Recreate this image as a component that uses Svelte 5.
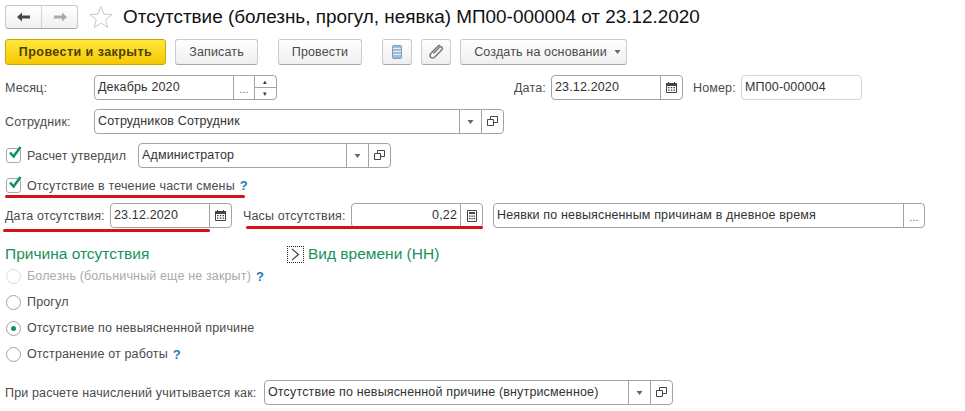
<script>
  const reasons = [
    { label: "Болезнь (больничный еще не закрыт)", disabled: true, help: true },
    { label: "Прогул" },
    { label: "Отсутствие по невыясненной причине", checked: true },
    { label: "Отстранение от работы", help: true },
  ];
</script>

{#snippet caret()}
  <svg class="ico" width="7" height="4" viewBox="0 0 7 4"><path d="M0.5 0h6L3.5 4z" fill="#666" /></svg>
{/snippet}

{#snippet openIcon()}
  <svg class="ico" width="11" height="11" viewBox="0 0 11 11" fill="none" stroke="#444" stroke-width="1">
    <path d="M3.5 3.5V0.5h7v6H6.5" />
    <path d="M0.5 3.5h6v6h-6z" />
  </svg>
{/snippet}

{#snippet calendar()}
  <svg class="ico" width="11" height="11" viewBox="0 0 11 11">
    <path d="M0.5 1.5h10v9h-10z" fill="#fff" stroke="#444" />
    <path d="M0.5 1.5h10v2h-10zM2.5 0v2M8.5 0v2" fill="#444" stroke="#444" />
    <path d="M2 5h1.5v1.2H2zM4.8 5h1.5v1.2H4.8zM7.5 5H9v1.2H7.5zM2 7.5h1.5v1.2H2zM4.8 7.5h1.5v1.2H4.8zM7.5 7.5H9v1.2H7.5z" fill="#444" />
  </svg>
{/snippet}

{#snippet check()}
  <span class="check">
    <svg width="17" height="16" viewBox="0 0 17 16" fill="none">
      <path d="M4 7.5l3.6 4L14.5 2" stroke="#14925a" stroke-width="2.6" />
    </svg>
  </span>
{/snippet}

<main>
  <header class="titlebar">
    <div class="nav">
      <button class="nav-btn" aria-label="Назад">
        <svg width="14" height="10" viewBox="0 0 14 10"><path d="M0 5l5-4.5V3.5h8v3H5v3z" fill="#444" /></svg>
      </button>
      <button class="nav-btn" aria-label="Вперед">
        <svg width="14" height="10" viewBox="0 0 14 10"><path d="M14 5L9 .5V3.5H1v3h8v3z" fill="#aaa" /></svg>
      </button>
    </div>
    <svg class="star" width="24" height="24" viewBox="0 0 24 24">
      <path d="M12 1.5l2.9 7.6 8.1.4-6.3 5.1 2.1 7.9L12 18.1l-6.8 4.4 2.1-7.9L1 9.5l8.1-.4z" fill="#fff" stroke="#c9c9c9" />
    </svg>
    <h1>Отсутствие (болезнь, прогул, неявка) МП00-000004 от 23.12.2020</h1>
  </header>

  <div class="toolbar">
    <button class="btn primary">Провести и закрыть</button>
    <button class="btn save">Записать</button>
    <button class="btn post">Провести</button>
    <button class="btn icon" aria-label="Отчеты">
      <svg width="10" height="14" viewBox="0 0 10 14">
        <rect x="0.5" y="0.5" width="9" height="13" rx="1" fill="#9dbdd6" stroke="#7d9bb3" />
        <path d="M1 3.5h8M1 6.5h8M1 9.5h8" stroke="#e4edf3" />
      </svg>
    </button>
    <button class="btn icon clip" aria-label="Файлы">
      <svg width="18" height="18" viewBox="0 0 18 18" fill="none" stroke="#707070" stroke-width="1.3">
        <path d="M6.5 10.5l6-6.2c1.7-1.6 4 .7 2.4 2.4L7.6 14.2c-2.6 2.4-6.3-1-3.8-3.7l7-7.2c.8-.8 1.6-1 2.4-.8" />
      </svg>
    </button>
    <button class="btn create">Создать на основании {@render caret()}</button>
  </div>

  <div class="row month-row">
    <span class="label w89">Месяц:</span>
    <div class="field f-month">
      <span class="val">Декабрь 2020</span>
      <span class="side dots">...</span>
      <span class="spin"><i>▴</i><i>▾</i></span>
    </div>
    <span class="label l-date">Дата:</span>
    <div class="field f-date">
      <span class="val">23.12.2020</span>
      <span class="side">{@render calendar()}</span>
    </div>
    <span class="label l-num">Номер:</span>
    <div class="field f-num"><span class="val">МП00-000004</span></div>
  </div>

  <div class="row emp-row">
    <span class="label w89">Сотрудник:</span>
    <div class="field f-emp">
      <span class="val">Сотрудников Сотрудник</span>
      <span class="side">{@render caret()}</span>
      <span class="side">{@render openIcon()}</span>
    </div>
  </div>

  <div class="row appr-row">
    {@render check()}
    <span class="label w111">Расчет утвердил</span>
    <div class="field f-appr">
      <span class="val">Администратор</span>
      <span class="side">{@render caret()}</span>
      <span class="side">{@render openIcon()}</span>
    </div>
  </div>

  <div class="row part-row">
    {@render check()}
    <span class="label">Отсутствие в течение части смены</span>
    <span class="help">?</span>
    <span class="red r1"></span>
  </div>

  <div class="row abs-row">
    <span class="label w105">Дата отсутствия:</span>
    <div class="field f-absdate">
      <span class="val">23.12.2020</span>
      <span class="side">{@render calendar()}</span>
    </div>
    <span class="label l-hours">Часы отсутствия:</span>
    <div class="field f-hours">
      <span class="val num">0,22</span>
      <span class="side">
        <svg class="ico" width="10" height="12" viewBox="0 0 10 12">
          <path d="M0.5 0.5h9v11h-9z" fill="#fff" stroke="#444" />
          <path d="M2 2h6v2H2zM2 5.5h1.5v1.3H2zM4.3 5.5h1.5v1.3H4.3zM6.5 5.5H8v1.3H6.5zM2 8h1.5v1.3H2zM4.3 8h1.5v1.3H4.3zM6.5 8H8v1.3H6.5z" fill="#444" />
        </svg>
      </span>
    </div>
    <div class="field f-kind">
      <span class="val">Неявки по невыясненным причинам в дневное время</span>
      <span class="side dots">...</span>
    </div>
    <span class="red r2"></span>
    <span class="red r3"></span>
  </div>

  <div class="row groups">
    <h2 class="w282">Причина отсутствия</h2>
    <span class="toggle">
      <svg width="9" height="13" viewBox="0 0 9 13" fill="none"><path d="M1 .8L7.5 6.5 1 12.2" stroke="#333" stroke-width="1.1" /></svg>
    </span>
    <h2>Вид времени (НН)</h2>
  </div>

  <div class="radios">
    {#each reasons as r}
      <div class="radio" class:disabled={r.disabled}>
        <span class="circle" class:on={r.checked}></span>
        <span class="label">{r.label}</span>
        {#if r.help}<span class="help">?</span>{/if}
      </div>
    {/each}
  </div>

  <div class="row calc-row">
    <span class="label w259">При расчете начислений учитывается как:</span>
    <div class="field f-calc">
      <span class="val">Отсутствие по невыясненной причине (внутрисменное)</span>
      <span class="side">{@render caret()}</span>
      <span class="side">{@render openIcon()}</span>
    </div>
  </div>
</main>

<style>
  :global(body) {
    margin: 0;
    background: #fff;
  }

  main {
    width: 965px;
    height: 411px;
    overflow: hidden;
    padding: 5px 0 0 5px;
    box-sizing: border-box;
    font-family: "Liberation Sans", Arial, sans-serif;
    font-size: 12.5px;
    letter-spacing: 0.15px;
    color: #4b4b4b;
  }

  .titlebar {
    display: flex;
    align-items: center;
    height: 24px;
  }

  .nav {
    display: flex;
    width: 73px;
    height: 24px;
    box-sizing: border-box;
    border: 1px solid #c8c8c8;
    border-bottom-color: #aaa;
    border-radius: 3px;
    background: linear-gradient(#fff, #f0f0f0);
  }

  .nav-btn {
    flex: 1;
    padding: 0;
    border: none;
    background: none;
    display: flex;
    align-items: center;
    justify-content: center;
  }

  .nav-btn + .nav-btn {
    border-left: 1px solid #d5d5d5;
  }

  .star {
    margin-left: 11px;
  }

  h1 {
    margin: 0 0 0 10px;
    font-size: 18.9px;
    font-weight: normal;
    letter-spacing: 0;
    color: #111;
    white-space: nowrap;
  }

  .toolbar {
    display: flex;
    margin-top: 10px;
    height: 26px;
  }

  .btn {
    height: 26px;
    padding: 0;
    box-sizing: border-box;
    border: 1px solid #cbcbcb;
    border-bottom-color: #a8a8a8;
    border-radius: 3px;
    background: linear-gradient(#fff, #efefef);
    font: inherit;
    letter-spacing: inherit;
    color: #4b4b4b;
    display: flex;
    align-items: center;
    justify-content: center;
  }

  .primary {
    width: 161px;
    border-color: #c9a900;
    background: linear-gradient(#ffe640, #f5c900);
    color: #4d4200;
    font-weight: bold;
    letter-spacing: 0.45px;
  }

  .save {
    width: 83px;
    margin-left: 9px;
  }

  .post {
    width: 84px;
    margin-left: 20px;
  }

  .icon {
    width: 30px;
    margin-left: 20px;
  }

  .clip {
    margin-left: 9px;
  }

  .create {
    width: 167px;
    margin-left: 9px;
    padding-left: 8px;
    gap: 7px;
  }

  .row {
    display: flex;
    align-items: center;
    position: relative;
  }

  .month-row {
    height: 25px;
    margin-top: 10px;
  }

  .emp-row {
    height: 25px;
    margin-top: 9px;
  }

  .appr-row {
    height: 25px;
    margin-top: 9px;
  }

  .part-row {
    height: 17px;
    margin-top: 9px;
  }

  .abs-row {
    height: 25px;
    margin-top: 9px;
  }

  .groups {
    height: 20px;
    margin-top: 16px;
  }

  .calc-row {
    height: 25px;
    margin-top: 13px;
  }

  .label {
    flex: none;
    white-space: nowrap;
  }

  .w89 {
    width: 89px;
  }

  .w105 {
    width: 105px;
  }

  .w111 {
    width: 111px;
  }

  .w259 {
    width: 259px;
  }

  .l-date {
    margin-left: 237px;
    width: 37px;
  }

  .l-num {
    margin-left: 10px;
    width: 48px;
  }

  .l-hours {
    margin-left: 11px;
    width: 108px;
  }

  .field {
    flex: none;
    display: flex;
    height: 25px;
    box-sizing: border-box;
    border: 1px solid #a3a3a3;
    border-radius: 4px;
    background: #fff;
    color: #333;
  }

  .val {
    flex: 1;
    min-width: 0;
    padding-left: 3px;
    line-height: 23px;
    white-space: nowrap;
    overflow: hidden;
  }

  .num {
    text-align: right;
    padding-right: 3px;
  }

  .side {
    flex: none;
    width: 21px;
    border-left: 1px solid #a3a3a3;
    display: flex;
    align-items: center;
    justify-content: center;
  }

  .dots {
    color: #666;
    font-size: 11px;
    padding-top: 3px;
    box-sizing: border-box;
  }

  .spin {
    flex: none;
    width: 21px;
    border-left: 1px solid #a3a3a3;
    display: grid;
    grid-template-rows: 1fr 1fr;
    font-size: 7px;
    line-height: 11px;
    text-align: center;
  }

  .spin i {
    font-style: normal;
  }

  .spin i + i {
    border-top: 1px solid #a3a3a3;
  }

  .ico {
    display: block;
  }

  .f-month {
    width: 183px;
  }

  .f-date {
    width: 132px;
  }

  .f-num {
    width: 121px;
    border-color: #d5d5d5;
  }

  .f-emp {
    width: 410px;
  }

  .f-appr {
    width: 253px;
  }

  .f-absdate {
    width: 122px;
  }

  .f-hours {
    width: 132px;
  }

  .f-kind {
    width: 432px;
    margin-left: 10px;
  }

  .f-calc {
    width: 409px;
  }

  .check {
    flex: none;
    position: relative;
    width: 15px;
    height: 15px;
    margin: 0 6px 0 1px;
    box-sizing: border-box;
    border: 1px solid #a8a8a8;
    border-radius: 3px;
  }

  .check svg {
    position: absolute;
    left: -1px;
    top: -4px;
  }

  .help {
    margin-left: 5px;
    color: #1f7bb0;
    font-size: 13px;
    font-weight: bold;
  }

  .red {
    position: absolute;
    height: 3px;
    background: #d90f1c;
    border-radius: 2px;
  }

  .r1 {
    left: 0;
    top: 18px;
    width: 240px;
  }

  .r2 {
    left: -2px;
    top: 26px;
    width: 207px;
  }

  .r3 {
    left: 241px;
    top: 23px;
    width: 237px;
  }

  h2 {
    margin: 0;
    font-size: 15.5px;
    font-weight: normal;
    letter-spacing: 0;
    color: #16925a;
    white-space: nowrap;
  }

  .w282 {
    width: 282px;
  }

  .toggle {
    width: 17px;
    height: 17px;
    margin-right: 4px;
    box-sizing: border-box;
    border: 1px dotted #222;
    display: flex;
    align-items: center;
    justify-content: center;
  }

  .radios {
    margin-top: -1px;
  }

  .radio {
    height: 26px;
    display: flex;
    align-items: center;
  }

  .circle {
    flex: none;
    width: 15px;
    height: 15px;
    margin: 0 6px 0 1px;
    box-sizing: border-box;
    border: 1px solid #a3a3a3;
    border-radius: 50%;
    display: flex;
    align-items: center;
    justify-content: center;
  }

  .circle.on::after {
    content: "";
    width: 5px;
    height: 5px;
    border-radius: 50%;
    background: #14925a;
  }

  .disabled .circle {
    border-color: #dcdcdc;
  }

  .disabled .label {
    color: #aaa;
  }
</style>
